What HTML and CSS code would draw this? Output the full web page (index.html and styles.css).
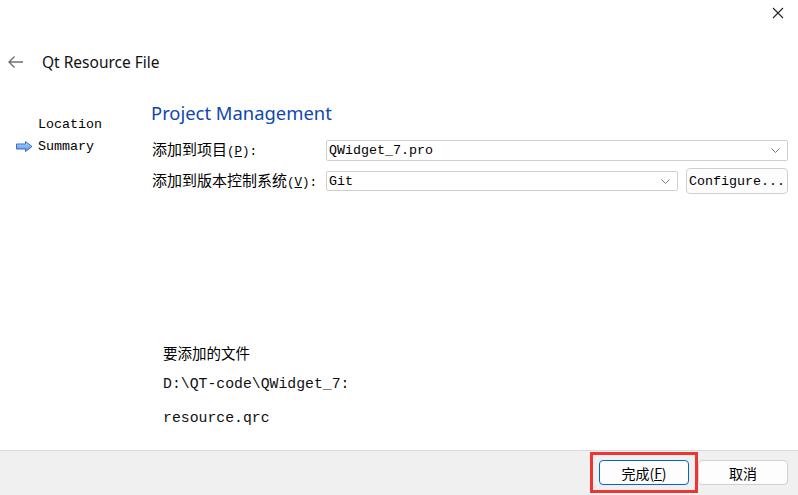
FILE: index.html
```html
<!DOCTYPE html>
<html lang="zh-CN">
<head>
<meta charset="utf-8">
<title>Qt Resource File</title>
<link rel="stylesheet" href="styles.css">
</head>
<body>
<div class="window">
  <div class="topbar">
    <svg class="close" width="12" height="12" viewBox="0 0 12 12"><path d="M1 1 L11 11 M11 1 L1 11" stroke="#222" stroke-width="1.1" fill="none"/></svg>
  </div>
  <div class="titlebar">
    <svg class="back" width="17" height="14" viewBox="0 0 17 14"><path d="M16 7 H2 M7.5 1.5 L2 7 L7.5 12.5" stroke="#707070" stroke-width="1.4" fill="none"/></svg>
    <span class="title">Qt Resource File</span>
  </div>
  <div class="main">
    <div class="sidebar">
      <div class="step"><span class="marker"></span><span>Location</span></div>
      <div class="step"><span class="marker"><svg width="17" height="11" viewBox="0 0 17 11"><defs><linearGradient id="g" x1="0" y1="0" x2="0" y2="1"><stop offset="0" stop-color="#b9d8ff"/><stop offset="1" stop-color="#4e8fe6"/></linearGradient></defs><path d="M0.5 3 H9.5 V0.5 L16 5.5 L9.5 10.5 V8 H0.5 Z" fill="url(#g)" stroke="#3a6fc4" stroke-width="1"/></svg></span><span>Summary</span></div>
    </div>
    <div class="content">
      <h1 class="heading">Project Management</h1>
      <div class="form">
        <label class="lbl">添加到项目<span class="m">(<u>P</u>):</span></label>
        <div class="combo wide"><span>QWidget_7.pro</span><svg width="9" height="5" viewBox="0 0 9 5"><path d="M0.5 0.5 L4.5 4.5 L8.5 0.5" stroke="#777" fill="none"/></svg></div>
        <label class="lbl">添加到版本控制系统<span class="m">(<u>V</u>):</span></label>
        <div class="combo"><span>Git</span><svg width="9" height="5" viewBox="0 0 9 5"><path d="M0.5 0.5 L4.5 4.5 L8.5 0.5" stroke="#777" fill="none"/></svg></div>
        <button class="config">Configure...</button>
      </div>
      <div class="files">
        <div class="files-title">要添加的文件</div>
        <div class="path">D:\QT-code\QWidget_7:</div>
        <div class="path file">resource.qrc</div>
      </div>
    </div>
  </div>
  <div class="footer">
    <div class="hl-wrap">
      <button class="btn primary">完成(<u>F</u>)</button>
      <span class="highlight"></span>
    </div>
    <button class="btn">取消</button>
  </div>
</div>
</body>
</html>
```

FILE: styles.css
```css
html, body {
  margin: 0;
  padding: 0;
  background: #ffffff;
}
.window {
  width: 798px;
  height: 495px;
  display: flex;
  flex-direction: column;
  background: #ffffff;
  color: #000;
  overflow: hidden;
}
.topbar {
  height: 29px;
  display: flex;
  justify-content: flex-end;
  align-items: flex-start;
  padding-right: 14px;
  box-sizing: border-box;
}
.close {
  margin-top: 7px;
  display: block;
}
.titlebar {
  height: 24px;
  margin-top: 21px;
  display: flex;
  align-items: center;
}
.back {
  margin-left: 7px;
  display: block;
}
.title {
  margin-left: 18px;
  font-family: "Noto Sans", "Open Sans", sans-serif;
  font-size: 15.5px;
  color: #111;
}
.main {
  flex: 1;
  display: flex;
  padding-top: 26px;
}
.sidebar {
  width: 152px;
  flex: none;
  padding-top: 13px;
  box-sizing: border-box;
}
.step {
  display: flex;
  align-items: center;
  height: 22px;
  font-family: "Liberation Mono", monospace;
  font-size: 13.33px;
}
.marker {
  width: 38px;
  padding-left: 16px;
  box-sizing: border-box;
  display: flex;
  align-items: center;
}
.marker svg {
  display: block;
}
.content {
  flex: 1;
  padding-right: 10px;
}
.heading {
  margin: 0 0 0 -1px;
  height: 26px;
  line-height: 26px;
  font-family: "Noto Sans", "Open Sans", sans-serif;
  font-weight: normal;
  font-size: 18.4px;
  color: #0f46b0;
}
.form {
  margin-top: 14px;
  display: grid;
  grid-template-columns: 174px 1fr auto;
  grid-template-rows: 21px 26px;
  row-gap: 7px;
  align-items: center;
}
.lbl {
  font-family: "Noto Sans CJK SC", sans-serif;
  font-size: 15px;
  line-height: 20px;
  white-space: nowrap;
}
.m {
  font-family: "Liberation Mono", monospace;
  font-size: 12.5px;
}
.combo {
  height: 20px;
  box-sizing: border-box;
  border: 1px solid #cfcfcf;
  border-radius: 2px;
  background: #fff;
  display: flex;
  align-items: center;
  justify-content: space-between;
  padding: 0 7px 0 2px;
  font-family: "Liberation Mono", monospace;
  font-size: 13.33px;
}
.combo.wide {
  grid-column: 2 / 4;
  height: 21px;
}
.combo svg {
  display: block;
}
.config {
  margin-left: 8px;
  height: 26px;
  width: 102px;
  box-sizing: border-box;
  border: 1px solid #d0d0d0;
  border-radius: 4px;
  background: #fdfdfd;
  font-family: "Liberation Mono", monospace;
  font-size: 13.33px;
  padding: 0;
  color: #000;
}
.files {
  margin-top: 149px;
  padding-left: 11px;
}
.files-title {
  font-family: "Noto Sans CJK SC", sans-serif;
  font-size: 14.5px;
  line-height: 20px;
}
.path {
  margin-top: 11px;
  font-family: "Liberation Mono", monospace;
  font-size: 14.8px;
  line-height: 20px;
  color: #111;
}
.path.file {
  margin-top: 14px;
}
.footer {
  height: 45px;
  box-sizing: border-box;
  border-top: 1px solid #dadada;
  background: #f0f0f0;
  display: flex;
  justify-content: flex-end;
  align-items: flex-start;
  padding: 9px 10px 0 0;
  gap: 9px;
}
.hl-wrap {
  position: relative;
  display: flex;
}
.btn {
  width: 90px;
  height: 25px;
  box-sizing: border-box;
  border: 1px solid #d0d0d0;
  border-radius: 4px;
  background: #fdfdfd;
  font-family: "Noto Sans CJK SC", sans-serif;
  font-size: 14px;
  color: #000;
  padding: 0;
  line-height: 22px;
}
.btn.primary {
  border-color: #0a64c2;
}
.highlight {
  position: absolute;
  left: -9px;
  right: -9px;
  top: -8px;
  bottom: -8px;
  border: 3px solid #ef3434;
  box-sizing: border-box;
  pointer-events: none;
}
```
